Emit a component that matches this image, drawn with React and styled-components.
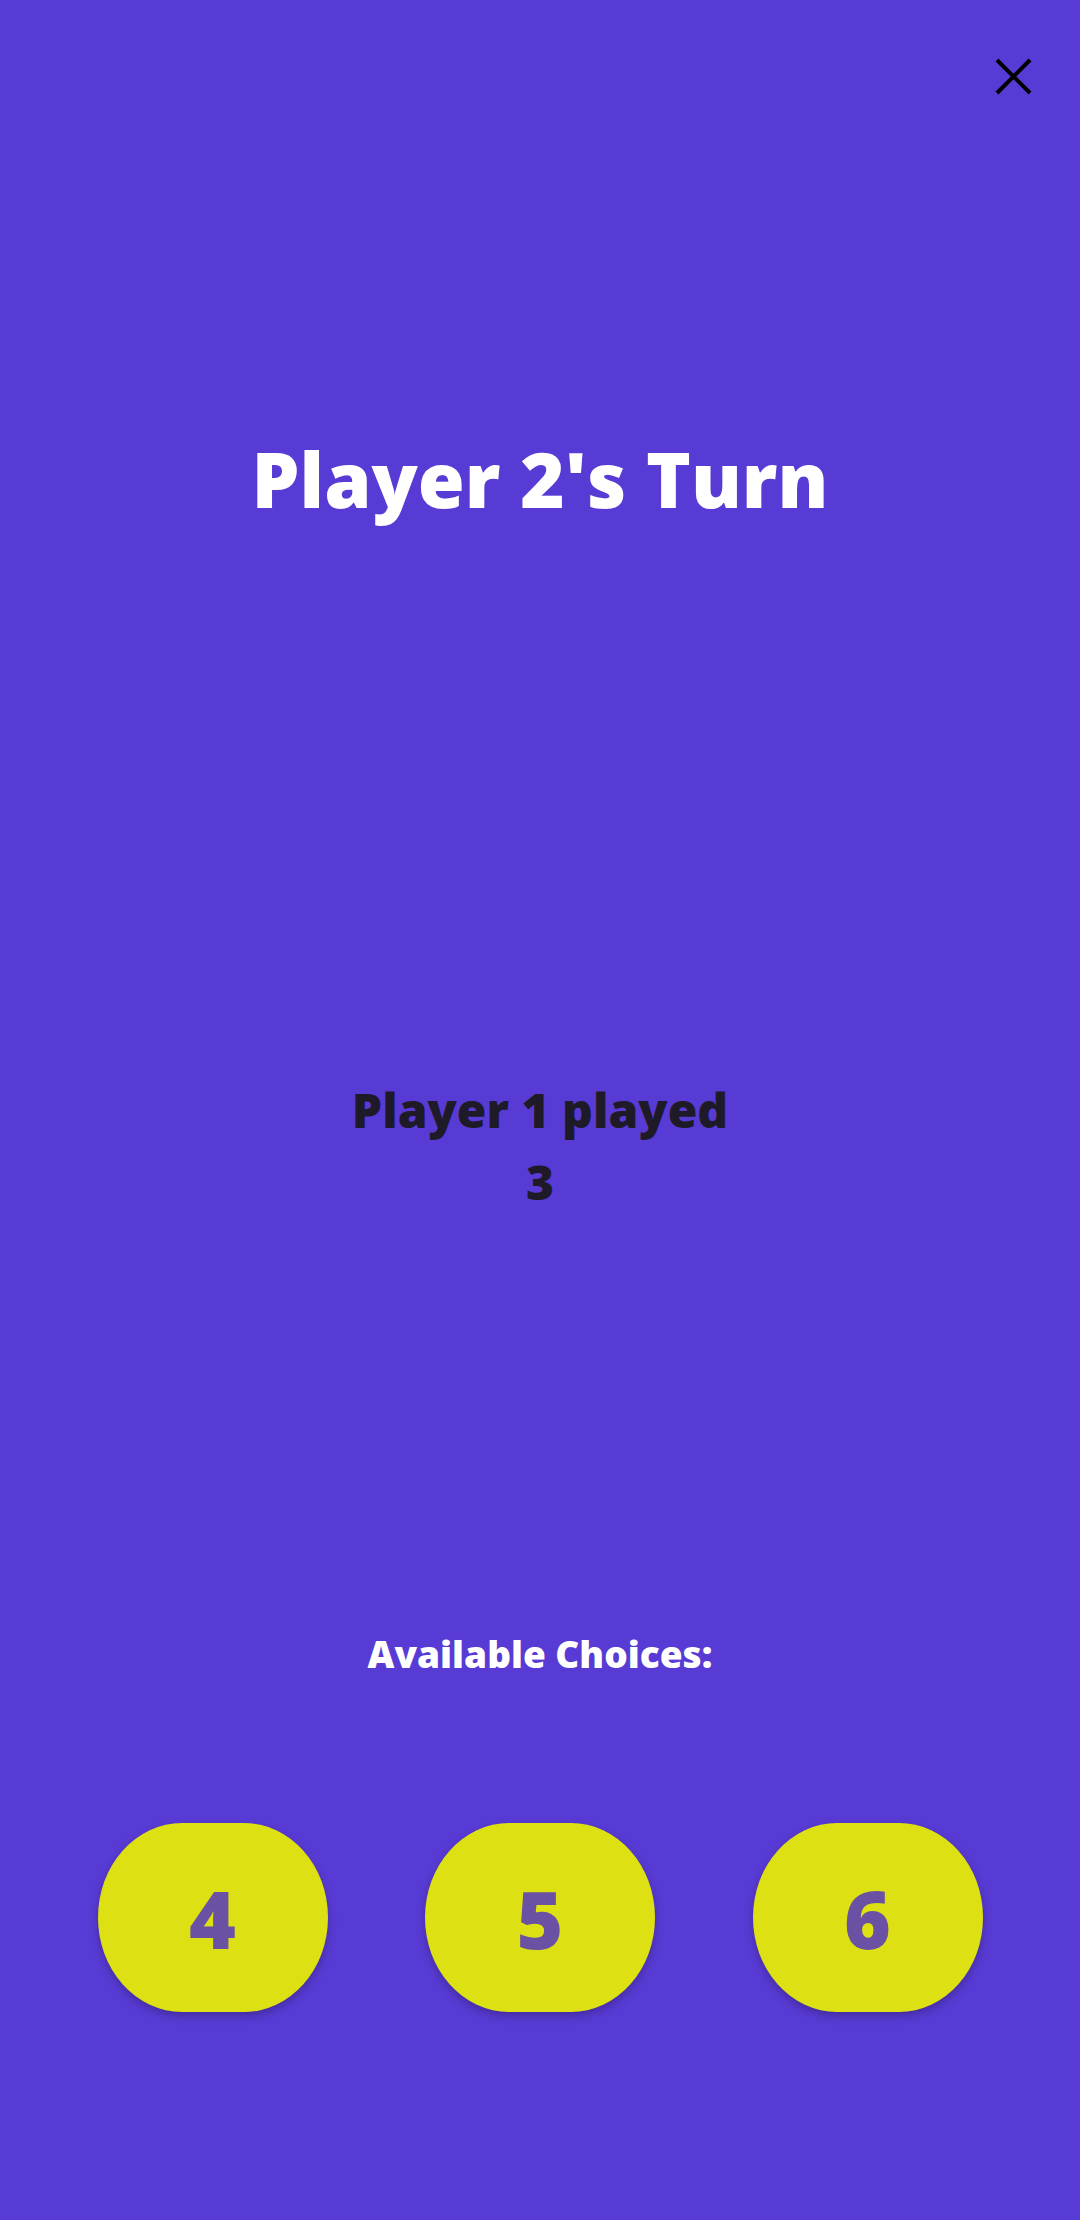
import React from "react";
import styled, { createGlobalStyle } from "styled-components";

const GlobalStyle = createGlobalStyle`
  html, body {
    margin: 0;
    padding: 0;
    background: #583bd4;
  }
  * {
    box-sizing: border-box;
  }
`;

const choices = [4, 5, 6];

const App = () => {
  return (
    <Screen>
      <GlobalStyle />
      <TopBar>
        <CloseButton aria-label="Close">
          <svg width="37" height="37" viewBox="0 0 37 37">
            <path d="M2 2 L35 35 M35 2 L2 35" stroke="#000" strokeWidth="4" />
          </svg>
        </CloseButton>
      </TopBar>

      <Title>Player 2's Turn</Title>

      <Message>
        Player 1 played
        <br />3
      </Message>

      <ChoicesLabel>Available Choices:</ChoicesLabel>

      <ChoiceRow>
        {choices.map((n) => (
          <ChoiceButton key={n}>{n}</ChoiceButton>
        ))}
      </ChoiceRow>
    </Screen>
  );
};

const Screen = styled.div`
  display: flex;
  flex-direction: column;
  align-items: center;
  width: 1080px;
  height: 2220px;
  background: #583bd4;
  font-family: "Open Sans", Lato, sans-serif;
  font-weight: 800;
`;

const TopBar = styled.div`
  display: flex;
  justify-content: flex-end;
  align-self: stretch;
  height: 152px;
  padding: 58px 48px 0 0;
`;

const CloseButton = styled.button`
  display: flex;
  width: 37px;
  height: 37px;
  padding: 0;
  border: none;
  background: none;
  cursor: pointer;
`;

const Title = styled.h1`
  margin: 287px 0 0;
  font-size: 76px;
  line-height: 80px;
  font-weight: 800;
  color: #ffffff;
  text-align: center;
`;

const Message = styled.p`
  margin: 555px 0 0;
  font-size: 48px;
  line-height: 72px;
  color: #1e1a28;
  text-align: center;
`;

const ChoicesLabel = styled.h2`
  margin: 418px 0 0;
  font-size: 37px;
  line-height: 36px;
  font-weight: 800;
  color: #ffffff;
  text-align: center;
`;

const ChoiceRow = styled.div`
  display: flex;
  justify-content: space-evenly;
  align-self: stretch;
  margin-top: 151px;
`;

const ChoiceButton = styled.button`
  display: flex;
  align-items: center;
  justify-content: center;
  width: 230px;
  height: 189px;
  padding: 0;
  border: none;
  border-radius: 84px / 50%;
  background: #dde012;
  box-shadow: 0 4px 8px rgba(0, 0, 0, 0.25);
  font-family: inherit;
  font-size: 80px;
  font-weight: 800;
  color: #6a51a3;
  cursor: pointer;
`;

export default App;
